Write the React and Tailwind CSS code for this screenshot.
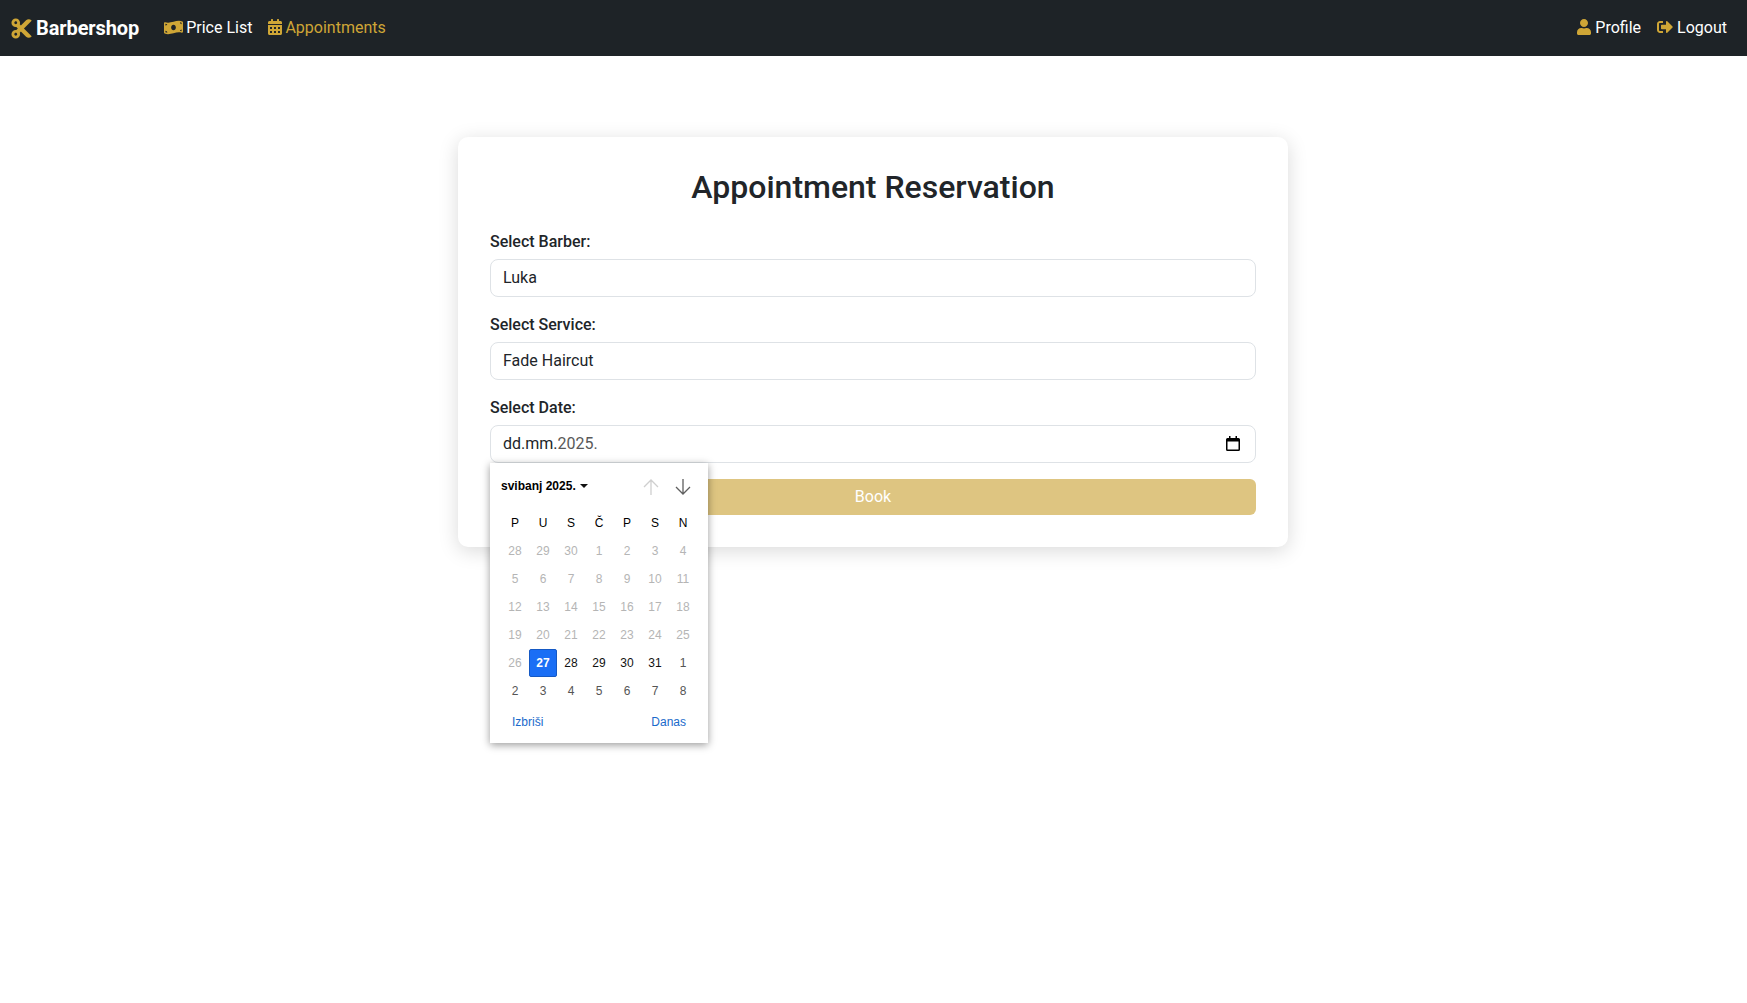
import React from 'react';
import { FaCut, FaMoneyBillWave, FaCalendarAlt, FaUser, FaSignOutAlt } from 'react-icons/fa';

const weekDays = ['P', 'U', 'S', 'Č', 'P', 'S', 'N'];

// one entry per cell of the month grid, kind decides the colour
const days = [
  ...[28, 29, 30, 1, 2, 3, 4, 5, 6, 7, 8, 9, 10, 11, 12, 13, 14, 15, 16, 17, 18, 19, 20, 21, 22, 23, 24, 25, 26].map((d) => ({ d, kind: 'past' })),
  { d: 27, kind: 'selected' },
  ...[28, 29, 30, 31].map((d) => ({ d, kind: 'month' })),
  ...[1, 2, 3, 4, 5, 6, 7, 8].map((d) => ({ d, kind: 'next' })),
];

const dayStyles = {
  past: 'text-[#b5b5b5]',
  month: 'text-[#111111]',
  next: 'text-[#555555]',
  selected: 'bg-[#1a6ef5] border border-[#1559c4] rounded-[2px] text-white font-bold',
};

const NavLink = ({ icon, children, gold, gap = 'gap-[4px]' }) => (
  <a className={`flex items-center ${gap} text-[16px] ${gold ? 'text-[#cfa636]' : 'text-white'}`}>
    <span className="text-[#cfa636] -translate-y-px">{icon}</span>
    {children}
  </a>
);

const Field = ({ label, value }) => (
  <div className="mb-[16px]">
    <label className="block mb-[5px] text-[16px] leading-6 font-medium text-[#212529]">{label}</label>
    <div className="h-[38px] px-[12px] flex items-center border border-[#dee2e6] rounded-[8px] text-[16px] text-[#212529]">
      {value}
    </div>
  </div>
);

const DatePopup = () => (
  <div className="absolute top-[37px] -left-px z-10 w-[218px] h-[280px] bg-white shadow-[0_2px_8px_rgba(0,0,0,0.4)] font-['Liberation_Sans',Arial,sans-serif] text-[12px]">
    <div className="h-[46px] pl-[11px] pr-[16px] flex items-center justify-between">
      <div className="flex items-center gap-[4px] font-bold text-black">
        svibanj 2025.
        <svg width="8" height="4" viewBox="0 0 8 4"><path d="M0 0h8L4 4z" fill="#111" /></svg>
      </div>
      <div className="flex items-center gap-[14px] pt-[2px]">
        <svg width="18" height="18" viewBox="0 0 18 18" fill="none" stroke="#cfcfcf" strokeWidth="1.3">
          <path d="M9 17V2M2 9l7-7 7 7" />
        </svg>
        <svg width="18" height="18" viewBox="0 0 18 18" fill="none" stroke="#5f5f5f" strokeWidth="1.3">
          <path d="M9 1v15M2 9l7 7 7-7" />
        </svg>
      </div>
    </div>
    <div className="px-[11px] grid grid-cols-7">
      {weekDays.map((w, i) => (
        <div key={i} className="h-[28px] flex items-center justify-center text-black">{w}</div>
      ))}
      {days.map((c, i) => (
        <div key={i} className={`h-[28px] flex items-center justify-center ${dayStyles[c.kind]}`}>{c.d}</div>
      ))}
    </div>
    <div className="mt-[3px] pl-[22px] pr-[22px] h-[28px] flex items-center justify-between text-[#1a6acb]">
      <span>Izbriši</span>
      <span>Danas</span>
    </div>
  </div>
);

const App = () => {
  return (
    <div className="min-h-[1003px] bg-white font-['Roboto',sans-serif]">
      <nav className="h-[56px] bg-[#1e2327] flex items-center justify-between pl-[10px] pr-[20px]">
        <div className="flex items-center">
          <a className="flex items-center gap-[3px] text-[20px] font-bold tracking-[-0.1px] text-white mr-[25px]">
            <FaCut className="text-[#cfa636] text-[23px]" />
            Barbershop
          </a>
          <div className="flex items-center gap-[15px]">
            <NavLink gap="gap-[3px]" icon={<FaMoneyBillWave className="text-[19px]" />}>Price List</NavLink>
            <NavLink gold gap="gap-[2px]" icon={<FaCalendarAlt className="text-[16px]" />}>Appointments</NavLink>
          </div>
        </div>
        <div className="flex items-center gap-[16px]">
          <NavLink gap="gap-[3px]" icon={<FaUser className="text-[16px]" />}>Profile</NavLink>
          <NavLink icon={<FaSignOutAlt className="text-[16px]" />}>Logout</NavLink>
        </div>
      </nav>

      <main className="flex justify-center pt-[81px] pr-[1px]">
        <div className="w-[830px] px-[32px] pt-[31px] pb-[32px] bg-white rounded-[10px] shadow-[0_4px_20px_rgba(0,0,0,0.15)]">
          <h1 className="mb-[24px] text-center text-[32px] leading-[38px] font-medium text-[#212529]">
            Appointment Reservation
          </h1>
          <Field label="Select Barber:" value="Luka" />
          <Field label="Select Service:" value="Fade Haircut" />
          <div className="mb-[16px]">
            <label className="block mb-[5px] text-[16px] leading-6 font-medium text-[#212529]">Select Date:</label>
            <div className="relative h-[38px] px-[12px] flex items-center justify-between border border-[#dee2e6] rounded-[8px] text-[16px] text-[#212529]">
              <span>dd.mm.<span className="text-[#595959]">2025.</span></span>
              <svg width="14" height="15" viewBox="0 0 14 15" className="mr-[3px] -mt-px">
                <path d="M3 0h1.5v2h5V0H11v2h1.5A1.5 1.5 0 0 1 14 3.5v10a1.5 1.5 0 0 1-1.5 1.5h-11A1.5 1.5 0 0 1 0 13.500v-10A1.5 1.5 0 0 1 1.500 2H3zM1.500 5.500v8h11v-8z" fill="#000" />
              </svg>
              <DatePopup />
            </div>
          </div>
          <button className="block w-full h-[36px] rounded-[6px] bg-[#dec581] text-white text-[16px]">Book</button>
        </div>
      </main>
    </div>
  );
};

export default App;
